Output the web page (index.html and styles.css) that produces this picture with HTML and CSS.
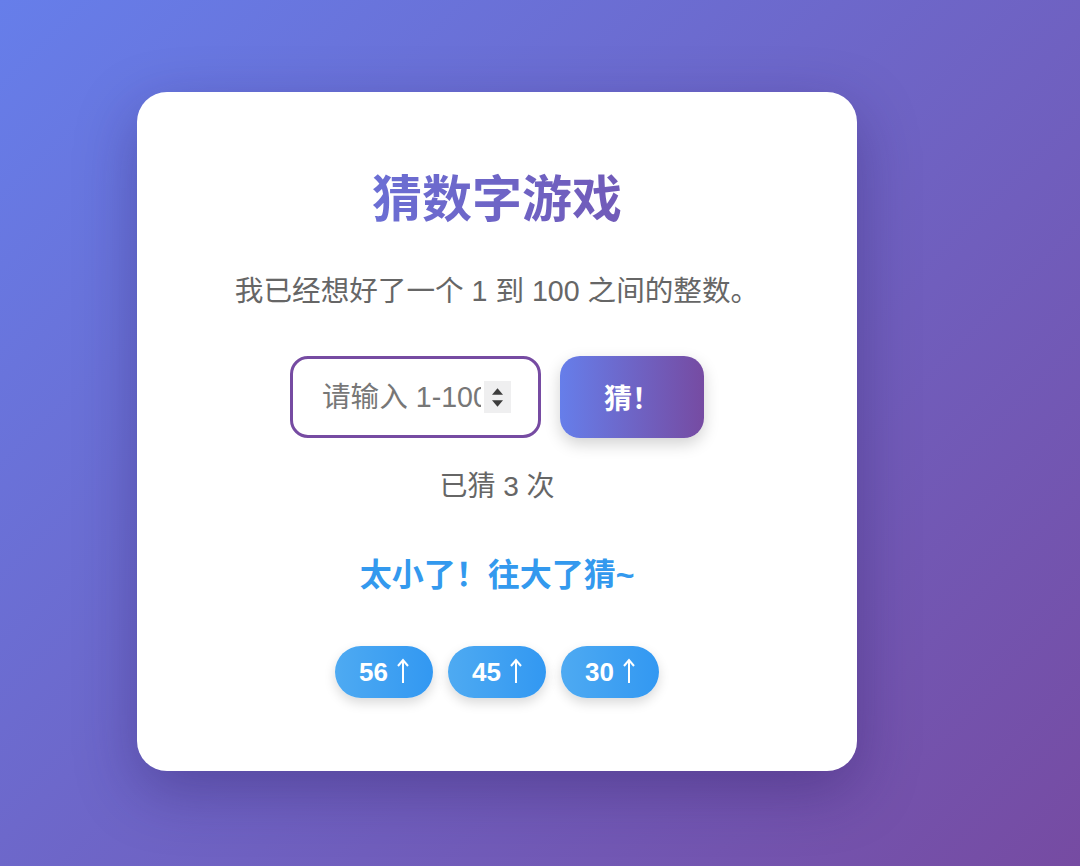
FILE: index.html
```html
<!DOCTYPE html>
<html lang="zh-CN">

<head>
    <meta charset="UTF-8">
    <meta name="viewport" content="width=device-width, initial-scale=1.0">
    <title>猜数字游戏</title>
    <link rel="stylesheet" href="styles.css">
</head>

<body>
    <div class="game-card">
        <h1 class="title">猜数字游戏</h1>
        <p class="intro">我已经想好了一个 1 到 100 之间的整数。</p>

        <div class="guess-row">
            <div class="input-wrap">
                <input type="number" id="guessInput" class="guess-input" min="1" max="100" placeholder="请输入 1-100">
                <span class="spinner">
                    <svg viewBox="0 0 10 6"><path d="M5 0L10 6H0z"/></svg>
                    <svg viewBox="0 0 10 6"><path d="M0 0H10L5 6z"/></svg>
                </span>
            </div>
            <button class="guess-btn">猜！</button>
        </div>

        <p class="count">已猜 3 次</p>
        <p class="feedback">太小了！往大了猜~</p>

        <div class="history">
            <span class="chip">56 <svg class="arrow" viewBox="0 0 12 26"><path d="M6 25V2M1 8l5-6 5 6"/></svg></span>
            <span class="chip">45 <svg class="arrow" viewBox="0 0 12 26"><path d="M6 25V2M1 8l5-6 5 6"/></svg></span>
            <span class="chip">30 <svg class="arrow" viewBox="0 0 12 26"><path d="M6 25V2M1 8l5-6 5 6"/></svg></span>
        </div>
    </div>
</body>

</html>
```

FILE: styles.css
```css
html,
body {
    height: 100%;
}

body {
    margin: 0;
    padding: 92px 0 0 137px;
    box-sizing: border-box;
    font-family: "Liberation Sans", Arial, "Noto Sans CJK SC", sans-serif;
    background: linear-gradient(135deg, #667eea 0%, #764ba2 100%);
    overflow: hidden;
}

.game-card {
    width: 720px;
    box-sizing: border-box;
    padding: 79px 40px 73px;
    background: #fff;
    border-radius: 30px;
    box-shadow: 0 20px 60px rgba(40, 20, 90, 0.35);
    text-align: center;
}

.title {
    margin: 0;
    font-size: 50px;
    line-height: 58px;
    font-weight: bold;
    background: linear-gradient(90deg, #667eea, #764ba2);
    -webkit-background-clip: text;
    background-clip: text;
    color: transparent;
}

.intro {
    margin: 42px 0 0;
    font-size: 28.6px;
    line-height: 40px;
    color: #666;
}

.guess-row {
    margin-top: 45px;
    display: flex;
    justify-content: center;
    gap: 19px;
}

.input-wrap {
    position: relative;
}

.guess-input {
    display: block;
    width: 251px;
    height: 82px;
    box-sizing: border-box;
    padding: 0 57px 0 29px;
    border: 3px solid #764ba2;
    border-radius: 18px;
    font-family: inherit;
    font-size: 28.6px;
    color: #333;
    outline: none;
    -moz-appearance: textfield;
}

.guess-input::placeholder {
    color: #777;
}

.guess-input::-webkit-inner-spin-button,
.guess-input::-webkit-outer-spin-button {
    -webkit-appearance: none;
    margin: 0;
}

.spinner {
    position: absolute;
    top: 25px;
    right: 30px;
    width: 27px;
    height: 32px;
    display: flex;
    flex-direction: column;
    align-items: center;
    justify-content: center;
    gap: 5px;
    background: #efeff0;
}

.spinner svg {
    width: 11px;
    height: 7px;
    fill: #3c3c3c;
}

.guess-btn {
    width: 144px;
    height: 82px;
    border: none;
    border-radius: 20px;
    background: linear-gradient(90deg, #667eea, #764ba2);
    color: #fff;
    font-family: inherit;
    font-size: 28px;
    font-weight: bold;
    box-shadow: 0 6px 16px rgba(0, 0, 0, 0.18);
    cursor: pointer;
}

.count {
    margin: 29px 0 0;
    font-size: 28px;
    line-height: 40px;
    color: #666;
}

.feedback {
    margin: 48px 0 0;
    font-size: 32px;
    line-height: 40px;
    font-weight: bold;
    color: #3399ee;
}

.history {
    margin-top: 51px;
    display: flex;
    justify-content: center;
    gap: 15px;
}

.chip {
    width: 98px;
    height: 52px;
    display: flex;
    align-items: center;
    justify-content: center;
    gap: 9px;
    border-radius: 26px;
    background: linear-gradient(90deg, #4eaaf2, #3298f2);
    color: #fff;
    font-size: 26px;
    font-weight: bold;
    box-shadow: 0 5px 12px rgba(0, 0, 0, 0.15);
}

.arrow {
    width: 12px;
    height: 26px;
    margin-top: -2px;
    fill: none;
    stroke: #fff;
    stroke-width: 2;
}
```
